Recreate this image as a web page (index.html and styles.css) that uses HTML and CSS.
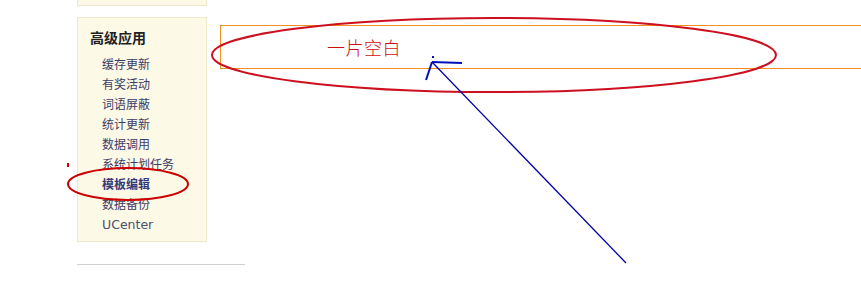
FILE: index.html
```html
<!DOCTYPE html>
<html lang="zh-CN">
<head>
<meta charset="utf-8">
<title>高级应用</title>
<link rel="stylesheet" href="styles.css">
</head>
<body>
<div class="page">
  <aside class="side">
    <div class="panel-top"></div>
    <div class="panel">
      <h3 class="panel-title">高级应用</h3>
      <ul class="menu">
        <li><a href="#">缓存更新</a></li>
        <li><a href="#">有奖活动</a></li>
        <li><a href="#">词语屏蔽</a></li>
        <li><a href="#">统计更新</a></li>
        <li><a href="#">数据调用</a></li>
        <li><a href="#">系统计划任务</a></li>
        <li><a href="#" class="current">模板编辑</a></li>
        <li><a href="#">数据备份</a></li>
        <li><a href="#" class="latin">UCenter</a></li>
      </ul>
    </div>
    <div class="rule"></div>
  </aside>
  <main class="content">
    <div class="blank-box"><span class="note">一片空白</span></div>
  </main>
</div>
<svg class="marks" width="861" height="299" viewBox="0 0 861 299" xmlns="http://www.w3.org/2000/svg">
  <ellipse cx="494" cy="55" rx="282" ry="37" fill="none" stroke="#cc1020" stroke-width="2"/>
  <ellipse cx="128" cy="184" rx="60" ry="16" fill="none" stroke="#cc0000" stroke-width="2"/>
  <rect x="67" y="163" width="2" height="4" fill="#cc0000"/>
  <line x1="432" y1="62" x2="626" y2="263" stroke="#0000aa" stroke-width="1.3"/>
  <line x1="432" y1="62" x2="462" y2="63" stroke="#0010b8" stroke-width="2"/>
  <line x1="432" y1="62" x2="426" y2="80" stroke="#0010b8" stroke-width="2"/>
  <rect x="432" y="56" width="2" height="2" fill="#0010b8"/>
</svg>
</body>
</html>
```
FILE: styles.css
```css
html, body {
  margin: 0;
  padding: 0;
  background: #ffffff;
}
body {
  font-family: "Noto Sans CJK SC", "DejaVu Sans", sans-serif;
  width: 861px;
  height: 299px;
  overflow: hidden;
  position: relative;
}
.page {
  display: flex;
  align-items: flex-start;
}
.side {
  margin-left: 77px;
  width: 168px;
  display: flex;
  flex-direction: column;
}
.panel-top {
  width: 128px;
  height: 5px;
  background: #fcf9e7;
  border: 1px solid #eee8cc;
  border-top: none;
}
.panel {
  margin-top: 11px;
  width: 128px;
  background: #fcf9e7;
  border: 1px solid #eee8cc;
  padding: 9px 0 9px 0;
}
.panel-title {
  margin: 0 0 5px 12px;
  font-size: 14px;
  line-height: 20px;
  font-weight: bold;
  color: #222222;
}
.menu {
  list-style: none;
  margin: 0;
  padding: 0 0 0 24px;
}
.menu li {
  height: 20px;
  line-height: 20px;
}
.menu a {
  font-size: 12px;
  color: #3c3c66;
  text-decoration: none;
}
.menu a.current {
  font-weight: bold;
  color: #363a78;
}
.menu a.latin {
  font-family: "DejaVu Sans", "Noto Sans CJK SC", sans-serif;
  font-size: 12.5px;
  color: #4a5270;
  line-height: 22px;
}
.rule {
  margin-top: 22px;
  height: 1px;
  background: #cfcfcf;
  width: 168px;
}
.content {
  flex: 1;
  margin-left: -25px;
  padding-top: 25px;
}
.blank-box {
  height: 42px;
  border: 1px solid #f0901e;
  border-right: none;
  margin-right: -10px;
  display: flex;
  align-items: center;
  padding-left: 106px;
}
.note {
  font-size: 18px;
  color: #d01010;
  font-weight: 300;
  letter-spacing: 0.5px;
}
.marks {
  position: absolute;
  left: 0;
  top: 0;
  pointer-events: none;
}
```
